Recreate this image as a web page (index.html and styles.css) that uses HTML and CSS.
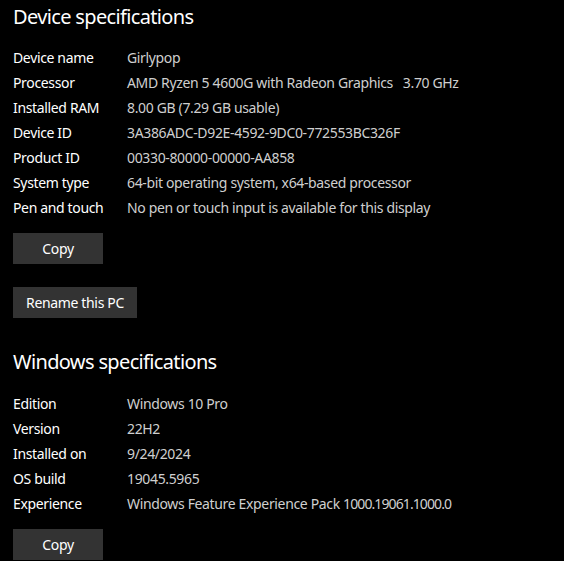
FILE: index.html
```html
<!DOCTYPE html>
<html lang="en">
<head>
<meta charset="utf-8">
<title>About</title>
<link rel="stylesheet" href="styles.css">
</head>
<body>
<main class="page">
  <section class="section">
    <h2 class="title">Device specifications</h2>
    <dl class="specs">
      <div class="row"><dt>Device name</dt><dd>Girlypop</dd></div>
      <div class="row"><dt>Processor</dt><dd>AMD Ryzen 5 4600G with Radeon Graphics&nbsp;&nbsp;&nbsp;3.70 GHz</dd></div>
      <div class="row"><dt>Installed RAM</dt><dd>8.00 GB (7.29 GB usable)</dd></div>
      <div class="row"><dt>Device ID</dt><dd>3A386ADC-D92E-4592-9DC0-772553BC326F</dd></div>
      <div class="row"><dt>Product ID</dt><dd>00330-80000-00000-AA858</dd></div>
      <div class="row"><dt>System type</dt><dd>64-bit operating system, x64-based processor</dd></div>
      <div class="row"><dt>Pen and touch</dt><dd>No pen or touch input is available for this display</dd></div>
    </dl>
    <button class="btn btn-copy">Copy</button>
    <button class="btn btn-rename">Rename this PC</button>
  </section>
  <section class="section section-win">
    <h2 class="title">Windows specifications</h2>
    <dl class="specs">
      <div class="row"><dt>Edition</dt><dd>Windows 10 Pro</dd></div>
      <div class="row"><dt>Version</dt><dd>22H2</dd></div>
      <div class="row"><dt>Installed on</dt><dd>9/24/2024</dd></div>
      <div class="row"><dt>OS build</dt><dd>19045.5965</dd></div>
      <div class="row"><dt>Experience</dt><dd>Windows Feature Experience Pack <span class="num">1000.19061.1000.0</span></dd></div>
    </dl>
    <button class="btn btn-copy">Copy</button>
  </section>
</main>
</body>
</html>
```
FILE: styles.css
```css
* { box-sizing: border-box; }
html, body {
  margin: 0;
  padding: 0;
  background: #000;
  color: #fff;
  font-family: "Noto Sans", "Open Sans", sans-serif;
  font-size: 14px;
  letter-spacing: -0.35px;
  overflow: hidden;
}
.page {
  padding: 3px 0 0 13px;
}
.section {
  display: flex;
  flex-direction: column;
  align-items: flex-start;
}
.section-win {
  margin-top: 30px;
}
.title {
  margin: 0;
  font-size: 20px;
  font-weight: 400;
  letter-spacing: -0.65px;
  line-height: 28px;
  height: 28px;
  color: #fff;
}
.specs {
  margin: 14px 0 0 0;
  display: flex;
  flex-direction: column;
}
.section-win .specs {
  margin-top: 15px;
}
.row {
  display: flex;
  height: 25px;
  line-height: 25px;
  white-space: nowrap;
}
.row dt {
  width: 114px;
  color: #fff;
}
.row dd {
  margin: 0;
  color: #cfcfcf;
}
.num {
  letter-spacing: -0.9px;
}
.btn {
  margin-top: 13px;
  height: 31px;
  background: #333;
  color: #fff;
  border: none;
  font-family: inherit;
  font-size: 14px;
  letter-spacing: inherit;
  padding: 0 13px;
  line-height: 31px;
  white-space: nowrap;
}
.btn-copy {
  width: 90px;
}
.btn-rename {
  margin-top: 23px;
  min-width: 124px;
}
```
